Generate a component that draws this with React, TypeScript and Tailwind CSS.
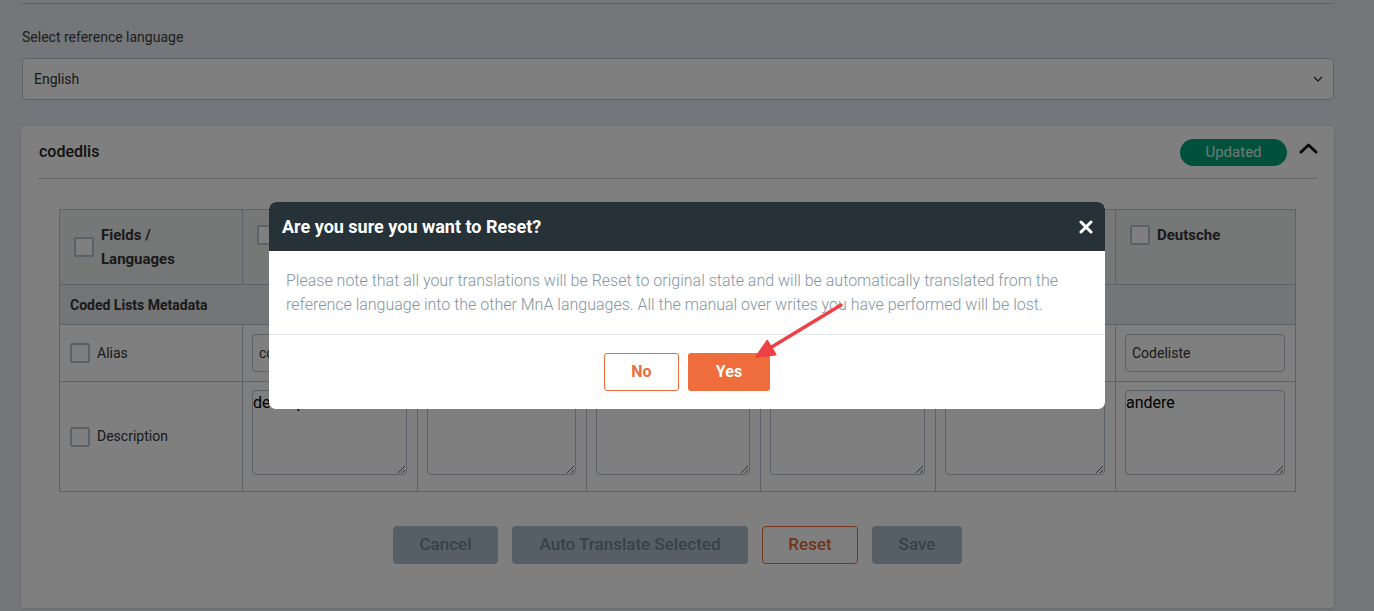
const languages = ["English", "Español", "Français", "Italiano", "Português", "Deutsche"];

function Checkbox() {
  return <span className="inline-block w-[20px] h-[20px] shrink-0 border-2 border-[#b4c3ce] rounded-[2px] bg-white" />;
}

function TranslationTable() {
  const alias = ["codedlis", "", "", "", "", "Codeliste"];
  const descriptions = ["description", "", "", "", "", "andere"];
  const widths = ["w-[183px]", "w-[175px]", "w-[169px]", "w-[174px]", "w-[175px]", "w-[180px]", "w-[180px]"];

  return (
    <table className="w-[1236px] table-fixed border-collapse text-[#333]">
      <colgroup>
        {widths.map((w, i) => (
          <col key={i} className={w} />
        ))}
      </colgroup>
      <thead>
        <tr className="bg-[#eceeef] h-[74px]">
          <th className="border border-[#b8c4ce] px-[14px] py-[13px] align-top text-left">
            <div className="flex items-center gap-[7px]">
              <Checkbox />
              <span className="text-[15px] font-bold leading-[24px] text-[#333]">
                Fields /<br />
                Languages
              </span>
            </div>
          </th>
          {languages.map((lang) => (
            <th key={lang} className="border border-[#b8c4ce] px-[14px] py-[13px] align-top text-left">
              <div className="flex items-center gap-[7px]">
                <Checkbox />
                <span className="text-[15px] font-bold leading-[24px] text-[#333]">{lang}</span>
              </div>
            </th>
          ))}
        </tr>
      </thead>
      <tbody>
        <tr className="bg-[#e9ebec] h-[40px]">
          <td colSpan={7} className="border border-[#b8c4ce] px-[10px] pt-[2px] text-[14px] font-bold text-[#333]">
            Coded Lists Metadata
          </td>
        </tr>
        <tr className="h-[56px]">
          <td className="border border-[#b8c4ce] px-[10px]">
            <div className="flex items-center gap-[7px]">
              <Checkbox />
              <span className="text-[14px]">Alias</span>
            </div>
          </td>
          {alias.map((v, i) => (
            <td key={i} className="border border-[#b8c4ce] pl-[9px] pr-[10px] py-[9px]">
              <input
                readOnly
                value={v}
                className="block w-full h-[38px] px-[6px] border border-[#b8c4ce] rounded-[4px] bg-white text-[14px] text-[#333] outline-none"
              />
            </td>
          ))}
        </tr>
        <tr className="h-[110px]">
          <td className="border border-[#b8c4ce] px-[10px] align-middle">
            <div className="flex items-center gap-[7px]">
              <Checkbox />
              <span className="text-[14px]">Description</span>
            </div>
          </td>
          {descriptions.map((v, i) => (
            <td key={i} className="border border-[#b8c4ce] pl-[9px] pr-[10px] pt-[8px] pb-[15px] align-top">
              <textarea
                readOnly
                value={v}
                className="block w-full h-[85px] p-0 border border-[#b8c4ce] rounded-[4px] bg-white text-[16px] leading-[24px] text-black outline-none resize-y"
              />
            </td>
          ))}
        </tr>
      </tbody>
    </table>
  );
}

function ResetDialog() {
  return (
    <div className="fixed inset-0 bg-black/50">
      <div className="flex justify-center pt-[202px]">
        <div className="w-[836px] bg-white rounded-[7px] overflow-hidden">
          <div className="h-[49px] bg-[#263238] flex items-center justify-between pl-[13px] pr-[12px]">
            <h2 className="text-[18px] font-bold text-white">Are you sure you want to Reset?</h2>
            <svg width="14" height="14" viewBox="0 0 14 14" className="mt-[1px]">
              <path d="M2 2 L12 12 M12 2 L2 12" stroke="#fff" strokeWidth="3" strokeLinecap="round" />
            </svg>
          </div>
          <div className="px-[17px] pt-[18px] pb-[17px] text-[16px] leading-[24px] text-[#8395a2] font-light">
            Please note that all your translations will be Reset to original state and will be automatically translated from the
            reference language into the other MnA languages. All the manual over writes you have performed will be lost.
          </div>
          <div className="border-t border-[#e3e7eb] flex justify-center gap-[9px] pt-[18px] pb-[18px]">
            <button className="w-[75px] h-[38px] border border-[#ef6c3c] rounded-[3px] bg-white text-[16px] font-bold text-[#ef6c3c]">
              No
            </button>
            <button className="w-[82px] h-[38px] rounded-[3px] bg-[#ef6c3c] text-[16px] font-bold text-white">Yes</button>
          </div>
        </div>
      </div>
      {/* annotation arrow */}
      <svg className="absolute left-0 top-0 pointer-events-none" width="1374" height="611">
        <line x1="841" y1="305" x2="770" y2="348" stroke="#ee4146" strokeWidth="3.5" strokeLinecap="round" />
        <polygon points="756,357 775.5,354.5 767.3,340.9" fill="#ee4146" stroke="#ee4146" strokeWidth="2" strokeLinejoin="round" />
      </svg>
    </div>
  );
}

export default function App() {
  return (
    <div className="relative min-h-[611px] overflow-hidden bg-[#e9edf2] font-['Roboto',sans-serif]">
      <div className="ml-[22px] w-[1312px]">
        <div className="h-[4px] border-b border-[#bcc3cc]" />

        <label className="block mt-[23px] text-[14px] text-[#3c3c3c]">Select reference language</label>
        <div className="mt-[10px] h-[42px] border border-[#bcc5ce] rounded-[4px] bg-white flex items-center justify-between pl-[11px] pr-[10px]">
          <span className="text-[14px] text-[#333]">English</span>
          <svg width="10" height="6" viewBox="0 0 10 6">
            <path d="M1 1 L5 5 L9 1" stroke="#333" strokeWidth="1.3" fill="none" />
          </svg>
        </div>

        <div className="mt-[26px] -ml-[1px] w-[1313px] h-[482px] bg-white rounded-[4px] shadow-[0_1px_3px_rgba(0,0,0,0.12)] px-[17px]">
          <div className="h-[53px] border-b border-[#c4ccd3] flex items-center justify-between">
            <span className="pl-[1px] text-[16px] font-medium text-[#222]">codedlis</span>
            <div className="flex items-center gap-[12px] -mr-[1px]">
              <span className="h-[27px] w-[107px] rounded-full bg-[#00a277] flex items-center justify-center text-[15px] text-[#dff3ea]">
                Updated
              </span>
              <svg width="19" height="12" viewBox="0 0 19 12" className="-mt-[8px]">
                <path d="M2 10 L9.5 3 L17 10" stroke="#111" strokeWidth="3" fill="none" strokeLinecap="round" strokeLinejoin="round" />
              </svg>
            </div>
          </div>

          <div className="px-[21px] pt-[30px]">
            <TranslationTable />
          </div>

          <div className="mt-[34px] flex justify-center gap-[14px]">
            <button className="w-[105px] h-[38px] rounded-[4px] bg-[#acbfcb] text-[17px] font-medium text-[#6b8596]">Cancel</button>
            <button className="w-[236px] h-[38px] rounded-[4px] bg-[#acbfcb] text-[17px] font-medium text-[#6b8596]">
              Auto Translate Selected
            </button>
            <button className="w-[96px] h-[38px] rounded-[4px] border border-[#ee6b3c] bg-white text-[17px] font-medium text-[#e8673a]">
              Reset
            </button>
            <button className="w-[90px] h-[38px] rounded-[4px] bg-[#acbfcb] text-[17px] font-medium text-[#6b8596]">Save</button>
          </div>
        </div>
      </div>

      <ResetDialog />
    </div>
  );
}
